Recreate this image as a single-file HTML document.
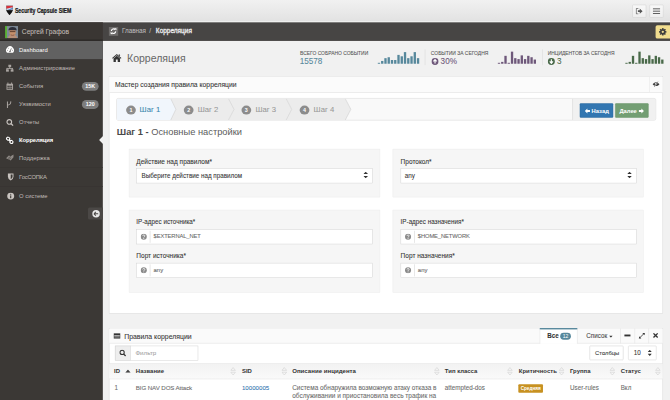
<!DOCTYPE html>
<html><head><meta charset="utf-8">
<style>
*{box-sizing:border-box;margin:0;padding:0}
html,body{width:670px;height:400px;overflow:hidden;background:#f1f1f1}
body{font-family:"Liberation Sans",sans-serif;color:#333}
.nw{-webkit-text-stroke:0.15px currentColor}
.th,b{-webkit-text-stroke:0}
#st{position:absolute;left:0;top:0;width:1440px;height:860px;transform:scale(0.465278);transform-origin:0 0;background:#f1f1f1;overflow:hidden}
.a{position:absolute}
.nw{white-space:nowrap}
#hdr{left:0;top:0;width:1440px;height:48px;background:linear-gradient(#f1f1f1,#e2e2e2);border-bottom:2px solid #f2f2f2}
.hbtn{top:10px;width:30px;height:28px;border:1px solid #d2d2d2;border-radius:2px;background:linear-gradient(#f8f8f8,#efefef)}
#rib{left:0;top:48px;width:1440px;height:40px;background:#474544}
#login{left:0;top:48px;width:221px;height:40px;background:#3a3633;border-top:1px solid #4a4643;border-bottom:3px solid #2b2826}
#side{left:0;top:88px;width:221px;height:772px;background:#3b3835}
.nav{left:0;width:221px;height:39px;color:#c0bbb7;font-size:12.6px;line-height:39px}
.nav .t{position:absolute;left:41px;top:0}
.nav.act{background:#616161;color:#fff}
.nav svg{position:absolute;left:12px;top:11px}
.badge{position:absolute;left:176px;top:10px;width:36px;height:19px;border-radius:10px;background:#7d7d7d;color:#fff;font-size:11.5px;line-height:19px;text-align:center;font-weight:bold}
.div{left:0;width:221px;height:1px;background:#4a4643;border-bottom:1px solid #2f2c2a}
.panel{background:#fff;border:1px solid #d2d2d2}
.well{background:#f6f6f6;border:1px solid #ececec}
.lbl{font-size:14px;color:#333}
.inp{background:#fff;border:1px solid #cfcfcf;height:32px}
.st-t{font-size:10.6px;color:#555}
.st-n{font-size:17.5px}
.stepb{width:21px;height:19px;border-radius:50%;background:#8c8c8c;color:#fff;font-size:11.5px;font-weight:bold;text-align:center;line-height:19px}
.step{font-size:16.6px;color:#999}
.btn{height:31px;border:1px solid;border-radius:2px;color:#fff;font-size:12.5px;font-weight:bold;text-align:center;line-height:31px}
.itx{font-size:13.5px;color:#333}
.th{top:790px;font-size:12.8px;font-weight:bold;color:#333}
.td{top:826px;font-size:13.5px;color:#6a6a6a}
</style></head><body><div id="st">

<div id="hdr" class="a"></div>
<svg class="a" style="left:13px;top:12px" width="15" height="21" viewBox="0 0 15 21">
 <path d="M0 0 H15 V7 Q15 14 7.5 21 Q0 14 0 7 Z" fill="#111"/>
 <path d="M0.6 0.6 H14.4 V9.5 H0.6 Z" fill="#c9dcee"/>
 <path d="M0.6 0.6 H14.4 V3.5 L9 4.5 L3 6.5 L0.6 6 Z" fill="#d8323a"/>
 <path d="M3 9.5 L14.4 4.5 V8 L9 9.5 Z" fill="#5a7fb8"/>
 <path d="M0.6 9.5 H14.4 V11 H0.6 Z" fill="#333"/>
</svg>
<div class="a nw" style="left:32px;top:14px;font-size:14.2px;font-weight:bold;color:#1a1a1a;transform:scaleX(0.79);transform-origin:0 0;-webkit-text-stroke:0.5px #1a1a1a">Security Capsule SIEM</div>
<div class="a hbtn" style="left:1359px"></div>
<svg class="a" style="left:1366px;top:17px" width="16" height="14" viewBox="0 0 16 14"><path d="M6 1 H1.5 V13 H6" fill="none" stroke="#555" stroke-width="1.6"/><path d="M5 5 H9 V1.5 L15 7 L9 12.5 V9 H5 Z" fill="#555"/></svg>
<div class="a hbtn" style="left:1396px"></div>
<svg class="a" style="left:1403px;top:16px" width="16" height="16" viewBox="0 0 16 16"><rect x="0" y="2" width="16" height="2" fill="#555"/><rect x="0" y="7" width="16" height="2" fill="#555"/><rect x="0" y="12" width="16" height="2" fill="#555"/></svg>

<div id="rib" class="a"></div>
<div id="login" class="a"></div>
<div class="a" style="left:11px;top:56px;width:4px;height:26px;background:#5cb336"></div>
<svg class="a" style="left:15px;top:56px" width="24" height="26" viewBox="0 0 24 26">
 <rect width="24" height="26" fill="#7d8a96"/>
 <path d="M2 26 Q3 18 12 18 Q21 18 22 26 Z" fill="#b89078"/>
 <ellipse cx="12" cy="13" rx="7" ry="8" fill="#c4906c"/>
 <path d="M3 9 Q4 2 12 2 Q20 2 21 9 Z" fill="#2d2f3a"/>
 <rect x="6" y="11" width="12" height="2" fill="#5a3a2a"/>
 <path d="M8 19 Q12 21 16 19" stroke="#7a4a3a" stroke-width="1.5" fill="none"/>
</svg>
<div class="a nw" style="left:47px;top:60px;font-size:14.3px;color:#c0bbb7">Сергей Графов</div>
<div class="a" style="left:234px;top:58px;width:20px;height:19px;background:#6d6b6a"></div>
<svg class="a" style="left:237px;top:60px" width="14" height="14" viewBox="0 0 14 14"><path d="M2.3 6.5 A4.8 4.8 0 0 1 10.8 3.8" fill="none" stroke="#fff" stroke-width="2.6"/><path d="M8.5 0.5 L13.5 0.5 L13.5 5.5 Z" fill="#fff"/><path d="M11.7 7.5 A4.8 4.8 0 0 1 3.2 10.2" fill="none" stroke="#fff" stroke-width="2.6"/><path d="M5.5 13.5 L0.5 13.5 L0.5 8.5 Z" fill="#fff"/></svg>
<div class="a nw" style="left:262px;top:58px;font-size:13.6px;color:#bbb">Главная</div>
<div class="a nw" style="left:321px;top:58px;font-size:13.6px;color:#bbb">/</div>
<div class="a nw" style="left:335px;top:58px;font-size:13.9px;color:#eee;-webkit-text-stroke:0.6px #eee">Корреляция</div>
<div class="a" style="left:1409px;top:54px;width:31px;height:29px;background:#f1dd8f;border-radius:4px 0 0 4px"></div>
<svg class="a" style="left:1416px;top:60px" width="17" height="17" viewBox="-8.5 -8.5 17 17"><g fill="#3d3d3d"><circle r="5.5"/><rect x="-1.8" y="-8" width="3.6" height="16"/><rect x="-1.8" y="-8" width="3.6" height="16" transform="rotate(45)"/><rect x="-1.8" y="-8" width="3.6" height="16" transform="rotate(90)"/><rect x="-1.8" y="-8" width="3.6" height="16" transform="rotate(135)"/></g><circle r="2.5" fill="#f1dd8f"/></svg>

<div id="side" class="a"></div>
<div class="a nav act" style="top:88px"><svg width="19" height="16" viewBox="0 0 19 16"><path d="M3 14.5 A8.5 8.5 0 1 1 16 14.5 Z" fill="#fff"/><path d="M9.5 11.5 L12.5 5" stroke="#616161" stroke-width="1.6"/><circle cx="9.5" cy="11.5" r="1.6" fill="#616161"/><circle cx="4.5" cy="9" r="1" fill="#616161"/><circle cx="14.5" cy="9" r="1" fill="#616161"/><circle cx="6.5" cy="4.5" r="1" fill="#616161"/></svg><span class="t">Dashboard</span></div>
<div class="a nav" style="top:127px"><svg width="19" height="17" viewBox="0 0 19 17"><g fill="#aaa5a1"><rect x="6" y="1" width="6" height="5"/><rect x="8" y="6" width="2" height="3"/><rect x="2" y="8" width="14" height="2"/><rect x="1" y="11" width="6" height="5"/><rect x="11" y="11" width="6" height="5"/><rect x="2" y="9" width="2" height="3"/><rect x="14" y="9" width="2" height="3"/></g></svg><span class="t">Администрирование</span></div>
<div class="a nav" style="top:166px"><svg width="19" height="17" viewBox="0 0 19 17"><g fill="#aaa5a1"><rect x="2" y="3" width="14" height="13"/><rect x="4" y="0" width="2" height="4"/><rect x="12" y="0" width="2" height="4"/></g><g fill="#3b3835"><rect x="4" y="7" width="3" height="3"/><rect x="8" y="7" width="3" height="3"/><rect x="12" y="7" width="2" height="3"/><rect x="4" y="11" width="3" height="3"/><rect x="8" y="11" width="3" height="3"/><rect x="12" y="11" width="2" height="3"/></g></svg><span class="t">События</span><span class="badge">15K</span></div>
<div class="a nav" style="top:205px"><svg width="19" height="17" viewBox="0 0 19 17"><path d="M4 2 V16 M4 10 Q12 9 11 2" fill="none" stroke="#aaa5a1" stroke-width="2.2"/></svg><span class="t">Уязвимости</span><span class="badge">120</span></div>
<div class="a nav" style="top:244px"><svg width="19" height="17" viewBox="0 0 19 17"><circle cx="8" cy="7" r="5" fill="none" stroke="#c9c4c0" stroke-width="2.4"/><path d="M11.5 10.5 L16 15" stroke="#c9c4c0" stroke-width="3"/></svg><span class="t">Отчеты</span></div>
<div class="a nav" style="top:282px;color:#fff;font-weight:bold"><svg width="19" height="17" viewBox="0 0 19 17"><g fill="none" stroke="#fff" stroke-width="2.4"><rect x="2" y="2" width="7" height="6" rx="3" transform="rotate(35 5.5 5)"/><rect x="9" y="9" width="7" height="6" rx="3" transform="rotate(35 12.5 12)"/><path d="M7 7 L11 11"/></g></svg><span class="t" style="letter-spacing:-0.3px">Корреляция</span></div>
<div class="a" style="left:213px;top:292px;width:0;height:0;border-top:9px solid transparent;border-bottom:9px solid transparent;border-right:9px solid #f1f1f1"></div>
<div class="a nav" style="top:320px"><svg width="19" height="17" viewBox="0 0 19 17"><path d="M1 9 L7 3 L11 5 L17 1 L17 7 L11 14 L7 12 Z" fill="#8f8a86"/><path d="M5 10 L11 5 M7 12 L12 8" stroke="#3b3835" stroke-width="1.2"/></svg><span class="t">Поддержка</span></div>
<div class="a div" style="top:359px"></div>
<div class="a nav" style="top:361px"><svg style="left:14px" width="19" height="17" viewBox="0 0 19 17"><path d="M3 1 H15 V8 Q15 13 9 16 Q3 13 3 8 Z" fill="#c9c4c0"/><path d="M9 3 H13 V8 Q13 11 9 13.5 Z" fill="#3b3835"/></svg><span class="t" style="letter-spacing:-0.4px">ГосСОПКА</span></div>
<div class="a div" style="top:400px"></div>
<div class="a nav" style="top:402px"><svg style="left:14px" width="19" height="17" viewBox="0 0 19 17"><circle cx="9" cy="8.5" r="7.5" fill="#c9c4c0"/><rect x="7.8" y="7" width="2.4" height="6" fill="#3b3835"/><circle cx="9" cy="4.5" r="1.3" fill="#3b3835"/></svg><span class="t">О системе</span></div>
<div class="a" style="left:189px;top:446px;width:32px;height:26px;background:#4b4846;border-radius:4px 0 0 4px"></div>
<svg class="a" style="left:197px;top:450px" width="19" height="19" viewBox="0 0 19 19"><circle cx="9.5" cy="9.5" r="8" fill="#e9e9e9"/><path d="M5 9.5 L9 5.5 M5 9.5 L9 13.5 M5 9.5 H14" stroke="#4b4846" stroke-width="2.2" fill="none"/></svg>

<!-- page title -->
<svg class="a" style="left:240px;top:115px" width="22" height="18" viewBox="0 0 22 18"><path d="M11 1 L21 9.5 L19.5 11 L11 4 L2.5 11 L1 9.5 Z" fill="#333"/><path d="M15 2 H18 V6 L15 4 Z" fill="#333"/><path d="M4 10.5 L11 5 L18 10.5 V18 H13 V13 H9 V18 H4 Z" fill="#333"/></svg>
<div class="a nw" style="left:273px;top:114px;font-size:22.6px;color:#676767;-webkit-text-stroke:0">Корреляция</div>

<!-- stats -->
<div class="a nw st-t" style="left:645px;top:109px">ВСЕГО СОБРАНО СОБЫТИИ</div>
<div class="a nw st-n" style="left:644px;top:122px;color:#57889c">15578</div>
<div class="a" style="left:913px;top:106px;width:1px;height:34px;background:#d6d6d6"></div>
<div class="a nw st-t" style="left:926px;top:109px">СОБЫТИИ ЗА СЕГОДНЯ</div>
<svg class="a" style="left:927px;top:124px" width="16" height="16" viewBox="0 0 16 16"><circle cx="8" cy="8" r="7.5" fill="#6e587a"/><path d="M8 12.5 V5 M4.5 8 L8 4 L11.5 8" stroke="#fff" stroke-width="2.4" fill="none"/></svg>
<div class="a nw st-n" style="left:947px;top:122px;color:#6e587a">30%</div>
<div class="a" style="left:1165px;top:106px;width:1px;height:34px;background:#d6d6d6"></div>
<div class="a nw st-t" style="left:1177px;top:109px">ИНЦИДЕНТОВ ЗА СЕГОДНЯ</div>
<svg class="a" style="left:1177px;top:124px" width="16" height="16" viewBox="0 0 16 16"><circle cx="8" cy="8" r="7.5" fill="#496949"/><path d="M8 3.5 V11 M4.5 8 L8 12 L11.5 8" stroke="#fff" stroke-width="2.4" fill="none"/></svg>
<div class="a nw st-n" style="left:1197px;top:122px;color:#496949">3</div>
<svg class="a" style="left:0;top:0" width="1440" height="160"><rect x="812" y="135" width="5" height="2" fill="#57889c"/><rect x="819" y="131" width="5" height="6" fill="#57889c"/><rect x="826" y="125" width="5" height="12" fill="#57889c"/><rect x="833" y="123" width="5" height="14" fill="#57889c"/><rect x="840" y="129" width="5" height="8" fill="#57889c"/><rect x="847" y="129" width="5" height="8" fill="#57889c"/><rect x="854" y="118" width="5" height="19" fill="#57889c"/><rect x="861" y="121" width="5" height="16" fill="#57889c"/><rect x="868" y="112" width="5" height="25" fill="#57889c"/><rect x="875" y="125" width="5" height="12" fill="#57889c"/><rect x="882" y="121" width="5" height="16" fill="#57889c"/><rect x="889" y="112" width="5" height="25" fill="#57889c"/><rect x="896" y="125" width="5" height="12" fill="#57889c"/><rect x="1070" y="135" width="5" height="2" fill="#6e587a"/><rect x="1077" y="133" width="5" height="4" fill="#6e587a"/><rect x="1084" y="120" width="5" height="17" fill="#6e587a"/><rect x="1091" y="135" width="5" height="2" fill="#6e587a"/><rect x="1098" y="111" width="5" height="26" fill="#6e587a"/><rect x="1105" y="125" width="5" height="12" fill="#6e587a"/><rect x="1112" y="127" width="5" height="10" fill="#6e587a"/><rect x="1119" y="119" width="5" height="18" fill="#6e587a"/><rect x="1126" y="127" width="5" height="10" fill="#6e587a"/><rect x="1133" y="120" width="5" height="17" fill="#6e587a"/><rect x="1140" y="123" width="5" height="14" fill="#6e587a"/><rect x="1147" y="128" width="5" height="9" fill="#6e587a"/><rect x="1344" y="135" width="5" height="2" fill="#496949"/><rect x="1351" y="133" width="5" height="4" fill="#496949"/><rect x="1358" y="120" width="5" height="17" fill="#496949"/><rect x="1365" y="135" width="5" height="2" fill="#496949"/><rect x="1372" y="111" width="5" height="26" fill="#496949"/><rect x="1379" y="125" width="5" height="12" fill="#496949"/><rect x="1386" y="127" width="5" height="10" fill="#496949"/><rect x="1393" y="119" width="5" height="18" fill="#496949"/><rect x="1400" y="127" width="5" height="10" fill="#496949"/><rect x="1407" y="120" width="5" height="17" fill="#496949"/><rect x="1414" y="123" width="5" height="14" fill="#496949"/><rect x="1421" y="128" width="5" height="9" fill="#496949"/></svg>

<!-- wizard panel -->
<div class="a panel" style="left:234px;top:164px;width:1191px;height:510px"></div>
<div class="a" style="left:235px;top:165px;width:1189px;height:34px;background:#fbfbfb;border-bottom:1px solid #d9d9d9"></div>
<div class="a nw" style="left:247px;top:175px;font-size:14.6px;color:#333">Мастер создания правила корреляции</div>
<div class="a" style="left:1396px;top:165px;width:1px;height:33px;background:#e4e4e4"></div>
<svg class="a" style="left:1402px;top:174px" width="16" height="14" viewBox="0 0 16 14"><path d="M0.5 7 Q8 -1 15.5 7 Q8 15 0.5 7 Z" fill="#3a3a3a"/><circle cx="7" cy="6" r="1.8" fill="#ddd"/><path d="M4 13 L12.5 1" stroke="#fbfbfb" stroke-width="2.2"/><path d="M4.5 12.5 L12 1.5" stroke="#3a3a3a" stroke-width="1.3"/></svg>

<!-- wizard -->
<div class="a" style="left:250px;top:211px;width:1160px;height:48px;background:#f9f9f9;border:1px solid #d4d4d4;border-radius:4px"></div>
<svg class="a" style="left:251px;top:212px" width="1158" height="46">
  <polygon points="0,0 116,0 127,23 116,46 0,46" fill="#f1f6fc"/>
  <polygon points="116,0 240,0 252,23 240,46 116,46 127,23" fill="#ececec"/>
  <polygon points="240,0 364,0 376,23 364,46 240,46 252,23" fill="#ececec"/>
  <polygon points="364,0 491,0 503,23 491,46 364,46 376,23" fill="#ececec"/>
  <polyline points="116,0 127,23 116,46" fill="none" stroke="#d4d4d4" stroke-width="1.5"/>
  <polyline points="240,0 252,23 240,46" fill="none" stroke="#d4d4d4" stroke-width="1.5"/>
  <polyline points="364,0 376,23 364,46" fill="none" stroke="#d4d4d4" stroke-width="1.5"/>
  <polyline points="491,0 503,23 491,46" fill="none" stroke="#d4d4d4" stroke-width="1.5"/>
  <rect x="979" y="0" width="179" height="46" fill="#f1f1f1"/>
  <line x1="979.5" y1="0" x2="979.5" y2="46" stroke="#d4d4d4"/>
</svg>
<div class="a stepb" style="left:271px;top:227px">1</div>
<div class="a nw step" style="left:300px;top:226px;color:#3a87ad">Шаг 1</div>
<div class="a stepb" style="left:395px;top:227px">2</div>
<div class="a nw step" style="left:425px;top:226px">Шаг 2</div>
<div class="a stepb" style="left:519px;top:227px">3</div>
<div class="a nw step" style="left:549px;top:226px">Шаг 3</div>
<div class="a stepb" style="left:644px;top:227px">4</div>
<div class="a nw step" style="left:674px;top:226px">Шаг 4</div>
<div class="a btn" style="left:1246px;top:222px;width:72px;background:#3276b1;border-color:#2c699d"><span style="padding-left:16px">Назад</span></div>
<svg class="a" style="left:1256px;top:232px" width="13" height="13" viewBox="0 0 13 13"><path d="M1 6.5 L6.5 1 V4.5 H12 V8.5 H6.5 V12 Z" fill="#fff"/></svg>
<div class="a btn" style="left:1322px;top:222px;width:72px;background:#739e73;border-color:#659265"><span style="padding-right:16px">Далее</span></div>
<svg class="a" style="left:1372px;top:232px" width="13" height="13" viewBox="0 0 13 13"><path d="M12 6.5 L6.5 1 V4.5 H1 V8.5 H6.5 V12 Z" fill="#fff"/></svg>

<div class="a nw" style="left:251px;top:272px;font-size:20px;color:#5c5c5c;-webkit-text-stroke:0"><b style="color:#484848">Шаг 1 -</b> Основные настройки</div>

<!-- wells row 1 -->
<div class="a well" style="left:277px;top:320px;width:540px;height:104px"></div>
<div class="a nw lbl" style="left:293px;top:339px">Действие над правилом*</div>
<div class="a inp" style="left:293px;top:362px;width:508px"></div>
<div class="a nw itx" style="left:304px;top:371px">Выберите действие над правилом</div>
<svg class="a" style="left:781px;top:369px" width="10" height="14" viewBox="0 0 10 14"><path d="M5 0 L10 5 H0 Z M5 14 L10 9 H0 Z" fill="#333"/></svg>
<div class="a well" style="left:844px;top:320px;width:539px;height:104px"></div>
<div class="a nw lbl" style="left:861px;top:339px">Протокол*</div>
<div class="a inp" style="left:861px;top:362px;width:507px"></div>
<div class="a nw itx" style="left:870px;top:371px">any</div>
<svg class="a" style="left:1348px;top:369px" width="10" height="14" viewBox="0 0 10 14"><path d="M5 0 L10 5 H0 Z M5 14 L10 9 H0 Z" fill="#333"/></svg>

<!-- wells row 2 -->
<div class="a well" style="left:277px;top:451px;width:540px;height:178px"></div>
<div class="a nw lbl" style="left:293px;top:470px;font-size:13.5px">IP-адрес источника*</div>
<div class="a inp" style="left:293px;top:493px;width:508px"></div>
<div class="a nw itx" style="left:330px;top:501px;color:#666;font-size:12.4px;letter-spacing:-0.2px">$EXTERNAL_NET</div>
<div class="a nw lbl" style="left:293px;top:542px">Порт источника*</div>
<div class="a inp" style="left:293px;top:565px;width:508px"></div>
<div class="a nw itx" style="left:330px;top:573px;color:#666;font-size:12.8px">any</div>
<div class="a well" style="left:844px;top:451px;width:539px;height:178px"></div>
<div class="a nw lbl" style="left:861px;top:470px;font-size:13.5px">IP-адрес назначения*</div>
<div class="a inp" style="left:861px;top:493px;width:507px"></div>
<div class="a nw itx" style="left:898px;top:501px;color:#666;font-size:12.4px;letter-spacing:-0.2px">$HOME_NETWORK</div>
<div class="a nw lbl" style="left:861px;top:542px">Порт назначения*</div>
<div class="a inp" style="left:861px;top:565px;width:507px"></div>
<div class="a nw itx" style="left:898px;top:573px;color:#666;font-size:12.8px">any</div>
<svg class="a" style="left:302px;top:502px" width="14" height="14" viewBox="0 0 14 14"><circle cx="7" cy="7" r="6.5" fill="#8a8a8a"/><path d="M4.8 5.3 Q4.8 3 7 3 Q9.3 3 9.3 5 Q9.3 6.3 7.6 7 Q7 7.3 7 8.5" fill="none" stroke="#fff" stroke-width="1.6"/><rect x="6.1" y="9.6" width="1.8" height="1.8" fill="#fff"/></svg><div class="a" style="left:322px;top:496px;width:1px;height:26px;background:#ccc"></div><svg class="a" style="left:302px;top:574px" width="14" height="14" viewBox="0 0 14 14"><circle cx="7" cy="7" r="6.5" fill="#8a8a8a"/><path d="M4.8 5.3 Q4.8 3 7 3 Q9.3 3 9.3 5 Q9.3 6.3 7.6 7 Q7 7.3 7 8.5" fill="none" stroke="#fff" stroke-width="1.6"/><rect x="6.1" y="9.6" width="1.8" height="1.8" fill="#fff"/></svg><div class="a" style="left:322px;top:568px;width:1px;height:26px;background:#ccc"></div><svg class="a" style="left:870px;top:502px" width="14" height="14" viewBox="0 0 14 14"><circle cx="7" cy="7" r="6.5" fill="#8a8a8a"/><path d="M4.8 5.3 Q4.8 3 7 3 Q9.3 3 9.3 5 Q9.3 6.3 7.6 7 Q7 7.3 7 8.5" fill="none" stroke="#fff" stroke-width="1.6"/><rect x="6.1" y="9.6" width="1.8" height="1.8" fill="#fff"/></svg><div class="a" style="left:890px;top:496px;width:1px;height:26px;background:#ccc"></div><svg class="a" style="left:870px;top:574px" width="14" height="14" viewBox="0 0 14 14"><circle cx="7" cy="7" r="6.5" fill="#8a8a8a"/><path d="M4.8 5.3 Q4.8 3 7 3 Q9.3 3 9.3 5 Q9.3 6.3 7.6 7 Q7 7.3 7 8.5" fill="none" stroke="#fff" stroke-width="1.6"/><rect x="6.1" y="9.6" width="1.8" height="1.8" fill="#fff"/></svg><div class="a" style="left:890px;top:568px;width:1px;height:26px;background:#ccc"></div>
<!-- table widget -->
<div class="a panel" style="left:234px;top:705px;width:1191px;height:200px"></div>
<div class="a" style="left:235px;top:706px;width:1189px;height:32px;background:#fafafa;border-bottom:1px solid #ddd"></div>
<svg class="a" style="left:244px;top:716px" width="15" height="12" viewBox="0 0 15 12"><rect width="15" height="12" fill="#333"/><rect x="1.5" y="4" width="12" height="1.3" fill="#fafafa"/><rect x="1.5" y="7.5" width="12" height="1.3" fill="#fafafa"/></svg>
<div class="a nw" style="left:267px;top:715px;font-size:14.8px;color:#333">Правила корреляции</div>
<div class="a" style="left:1160px;top:705px;width:81px;height:34px;background:#fff;border-top:3px solid #57889c;border-left:1px solid #ddd;border-right:1px solid #ddd"></div>
<div class="a nw" style="left:1176px;top:715px;font-size:13.5px;font-weight:bold;color:#333">Все</div>
<div class="a" style="left:1204px;top:715px;width:23px;height:15px;border-radius:8px;background:#57889c;color:#fff;font-size:11px;line-height:15px;text-align:center">12</div>
<div class="a nw" style="left:1260px;top:714px;font-size:13.5px;color:#444">Список</div>
<svg class="a" style="left:1309px;top:721px" width="8" height="5" viewBox="0 0 8 5"><path d="M0 0 H8 L4 5 Z" fill="#333"/></svg>
<div class="a" style="left:1333px;top:706px;width:1px;height:32px;background:#ddd"></div>
<div class="a" style="left:1364px;top:706px;width:1px;height:32px;background:#ddd"></div>
<div class="a" style="left:1394px;top:706px;width:1px;height:32px;background:#ddd"></div>
<div class="a" style="left:1342px;top:719px;width:13px;height:4px;background:#333"></div>
<svg class="a" style="left:1372px;top:714px" width="15" height="15" viewBox="0 0 15 15"><path d="M2 13 L13 2" stroke="#333" stroke-width="1.8"/><path d="M8.5 1.5 H13.5 V6.5 Z M1.5 8.5 V13.5 H6.5 Z" fill="#333"/></svg>
<svg class="a" style="left:1403px;top:715px" width="12" height="12" viewBox="0 0 12 12"><path d="M1.5 1.5 L10.5 10.5 M10.5 1.5 L1.5 10.5" stroke="#333" stroke-width="3"/></svg>

<div class="a" style="left:247px;top:743px;width:34px;height:32px;background:#eee;border:1px solid #ccc"></div>
<svg class="a" style="left:256px;top:751px" width="16" height="16" viewBox="0 0 16 16"><circle cx="6.5" cy="6.5" r="4.5" fill="none" stroke="#333" stroke-width="2.2"/><path d="M9.5 9.5 L14 14" stroke="#333" stroke-width="2.8"/></svg>
<div class="a inp" style="left:280px;top:743px;width:146px"></div>
<div class="a nw itx" style="left:291px;top:750px;color:#a5a5a5;font-size:13.3px">Фильтр</div>
<div class="a" style="left:1267px;top:743px;width:73px;height:31px;background:#fff;border:1px solid #ccc;border-radius:2px"></div>
<div class="a nw" style="left:1279px;top:751px;font-size:12.5px;color:#333">Столбцы</div>
<div class="a inp" style="left:1350px;top:743px;width:61px;height:31px;border-radius:2px"></div>
<div class="a nw" style="left:1362px;top:751px;font-size:13.5px;color:#333">10</div>
<svg class="a" style="left:1392px;top:752px" width="9" height="13" viewBox="0 0 9 13"><path d="M4.5 0 L9 4.5 H0 Z M4.5 13 L9 8.5 H0 Z" fill="#333"/></svg>

<div class="a" style="left:235px;top:781px;width:1189px;height:34px;background:linear-gradient(#f2f2f2,#fafafa);border-top:1px solid #ddd;border-bottom:1px solid #ddd"></div>
<div class="a nw th" style="left:245px">ID</div>
<svg class="a" style="left:269px;top:794px" width="12" height="7" viewBox="0 0 12 7"><path d="M6 0 L12 7 H0 Z" fill="#444"/></svg>
<div class="a nw th" style="left:292px">Название</div>
<div class="a nw th" style="left:520px">SID</div>
<div class="a nw th" style="left:628px;font-size:13.1px">Описание инцидента</div>
<div class="a nw th" style="left:956px">Тип класса</div>
<div class="a nw th" style="left:1115px">Критичность</div>
<div class="a nw th" style="left:1225px">Группа</div>
<div class="a nw th" style="left:1334px">Статус</div>
<svg class="a" style="left:495px;top:789px" width="12" height="18" viewBox="0 0 12 18"><path d="M6 1 L11 7 L1 7 Z M6 17 L11 11 L1 11 Z" fill="none" stroke="#cfcfcf" stroke-width="1.2"/></svg><svg class="a" style="left:605px;top:789px" width="12" height="18" viewBox="0 0 12 18"><path d="M6 1 L11 7 L1 7 Z M6 17 L11 11 L1 11 Z" fill="none" stroke="#cfcfcf" stroke-width="1.2"/></svg><svg class="a" style="left:933px;top:789px" width="12" height="18" viewBox="0 0 12 18"><path d="M6 1 L11 7 L1 7 Z M6 17 L11 11 L1 11 Z" fill="none" stroke="#cfcfcf" stroke-width="1.2"/></svg><svg class="a" style="left:1090px;top:789px" width="12" height="18" viewBox="0 0 12 18"><path d="M6 1 L11 7 L1 7 Z M6 17 L11 11 L1 11 Z" fill="none" stroke="#cfcfcf" stroke-width="1.2"/></svg><svg class="a" style="left:1201px;top:789px" width="12" height="18" viewBox="0 0 12 18"><path d="M6 1 L11 7 L1 7 Z M6 17 L11 11 L1 11 Z" fill="none" stroke="#cfcfcf" stroke-width="1.2"/></svg><svg class="a" style="left:1310px;top:789px" width="12" height="18" viewBox="0 0 12 18"><path d="M6 1 L11 7 L1 7 Z M6 17 L11 11 L1 11 Z" fill="none" stroke="#cfcfcf" stroke-width="1.2"/></svg><svg class="a" style="left:1408px;top:789px" width="12" height="18" viewBox="0 0 12 18"><path d="M6 1 L11 7 L1 7 Z M6 17 L11 11 L1 11 Z" fill="none" stroke="#cfcfcf" stroke-width="1.2"/></svg>
<div class="a nw td" style="left:246px">1</div>
<div class="a nw td" style="left:292px;font-size:13.3px;letter-spacing:-0.25px">BIG NAV DOS Attack</div>
<div class="a nw td" style="left:520px;color:#3276b1;font-size:13.2px">10000005</div>
<div class="a nw td" style="left:628px;line-height:17.5px;top:825.5px;font-size:13.9px">Система обнаружила возможную атаку отказа в<br>обслуживании и приостановила весь трафик на</div>
<div class="a nw td" style="left:956px">attempted-dos</div>
<div class="a" style="left:1114px;top:826px;width:53px;height:18px;background:#c79121;border-radius:2px;color:#fff;font-size:10px;font-weight:bold;line-height:18px;text-align:center">Средняя</div>
<div class="a nw td" style="left:1225px">User-rules</div>
<div class="a nw td" style="left:1334px">Вкл</div>
</div></body></html>
